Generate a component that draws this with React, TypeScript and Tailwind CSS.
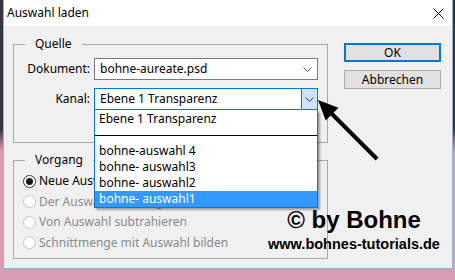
import type { ReactNode } from 'react';

const listItems = [
  { label: 'Ebene 1 Transparenz' },
  { separator: true },
  { label: 'bohne-auswahl 4' },
  { label: 'bohne- auswahl3' },
  { label: 'bohne- auswahl2' },
  { label: 'bohne- auswahl1', selected: true },
];

function Chevron({ className }: { className?: string }) {
  return (
    <svg width="9" height="5" viewBox="0 0 9 5" className={className}>
      <polyline points="0.5,0.5 4.5,4.5 8.5,0.5" fill="none" stroke="currentColor" strokeWidth="1" />
    </svg>
  );
}

function GroupBox({ title, children }: { title: string; children: ReactNode }) {
  return (
    <fieldset className="h-[107px] w-[315px] border border-[#a9a9a9]">
      <legend className="ml-[11px] px-[10px] leading-[16px]">{title}</legend>
      {children}
    </fieldset>
  );
}

function Radio({ label, checked, disabled }: { label: string; checked?: boolean; disabled?: boolean }) {
  return (
    <div className="flex h-[20.5px] items-center gap-[3px]">
      <span
        className={`flex h-[13px] w-[13px] items-center justify-center rounded-full border bg-white ${
          disabled ? 'border-[#c4c4c4] bg-[#f7f7f7]' : 'border-[#333]'
        }`}
      >
        {checked && <span className="h-[7px] w-[7px] rounded-full bg-[#1a1a1a]" />}
      </span>
      <span className={disabled ? 'text-[#8a8a8a]' : 'text-black'}>{label}</span>
    </div>
  );
}

export default function App() {
  return (
    <div className="relative h-[280px] w-[455px] overflow-hidden bg-[linear-gradient(to_bottom,#34353d_0%,#34353d_46%,#d99cb7_54%,#d99cb7_100%)] font-['Noto_Sans',sans-serif] text-[12px] text-black">
      <div className="ml-[3px] flex h-[269px] w-[450px] flex-col border-x border-b border-[#8db3dd] bg-[#f0f0f0]">
        <div className="flex h-[26px] items-center justify-between bg-white pl-[3px] pr-[8px]">
          <span>Auswahl laden</span>
          <svg width="11" height="11" viewBox="0 0 11 11">
            <path d="M0.5 0.5 L10.5 10.5 M10.5 0.5 L0.5 10.5" stroke="#111" strokeWidth="1" />
          </svg>
        </div>

        <div className="flex pl-[9px] pt-[10px]">
          <div className="flex flex-col gap-[9px]">
            <GroupBox title="Quelle">
              <div className="mt-[6px] flex items-center">
                <span className="w-[76px] text-right">Dokument:</span>
                <div className="ml-[4px] flex h-[22px] w-[224px] items-center justify-between border border-[#7a7a7a] bg-white pl-[5px] pr-[5px]">
                  <span>bohne-aureate.psd</span>
                  <Chevron className="text-[#555]" />
                </div>
              </div>
              <div className="mt-[8px] flex items-center">
                <span className="w-[76px] text-right">Kanal:</span>
                <div className="relative ml-[4px] flex h-[22px] w-[224px] items-center justify-between border border-[#0078d7] bg-white pl-[5px]">
                  <span>Ebene 1 Transparenz</span>
                  <span className="flex h-full w-[16px] items-center justify-center border-l border-[#0078d7] bg-[#cce4f7] text-[#333]">
                    <Chevron />
                  </span>
                  <div className="absolute left-[-1px] top-[21px] z-10 w-[224px] border-x border-b border-[#0078d7] bg-white pt-[1px] shadow-[2px_2px_2px_rgba(0,0,0,0.35)]">
                    {listItems.map((item, i) =>
                      item.separator ? (
                        <div key={i} className="flex h-[16px] items-center">
                          <div className="h-[1px] w-full bg-black" />
                        </div>
                      ) : (
                        <div
                          key={i}
                          className={`flex h-[16px] items-center pl-[4px] ${item.selected ? 'bg-[#3399ff] text-white' : ''}`}
                        >
                          {item.label}
                        </div>
                      ),
                    )}
                  </div>
                </div>
              </div>
            </GroupBox>

            <GroupBox title="Vorgang">
              <div className="mt-[3px] pl-[9px]">
                <Radio label="Neue Auswahl" checked />
                <Radio label="Der Auswahl hinzufügen" disabled />
                <Radio label="Von Auswahl subtrahieren" disabled />
                <Radio label="Schnittmenge mit Auswahl bilden" disabled />
              </div>
            </GroupBox>
          </div>

          <div className="ml-[16px] mt-[7px] flex flex-col gap-[8px]">
            <button className="flex h-[19px] w-[97px] items-center justify-center border-2 border-[#0078d7] bg-[#e1e1e1]">
              OK
            </button>
            <button className="flex h-[19px] w-[97px] items-center justify-center border border-[#adadad] bg-[#e1e1e1]">
              Abbrechen
            </button>
          </div>
        </div>
      </div>

      <div className="absolute left-[264px] top-[208px] w-[180px] text-center font-['Liberation_Sans',Arial,sans-serif] font-bold text-black">
        <div className="text-[24px] leading-[24px]">© by Bohne</div>
        <div className="mt-[3px] text-[14.5px] leading-[18px]">www.bohnes-tutorials.de</div>
      </div>

      <svg className="pointer-events-none absolute left-0 top-0" width="455" height="280" viewBox="0 0 455 280">
        <line x1="377" y1="159" x2="330" y2="112" stroke="#000" strokeWidth="4" />
        <polygon points="318,100 338.5,107.7 325.7,120.5" fill="#000" />
        <line x1="277" y1="158" x2="217" y2="190" stroke="#000" strokeWidth="4" />
        <polygon points="200,199 223.6,196.6 215.2,180.8" fill="#000" />
      </svg>
    </div>
  );
}
